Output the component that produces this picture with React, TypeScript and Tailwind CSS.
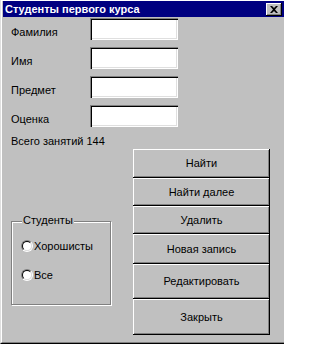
import React from "react";

const raised =
  "shadow-[inset_-1px_-1px_#000,inset_1px_1px_#fff,inset_-2px_-2px_#808080]";
const sunken =
  "shadow-[inset_1px_1px_#808080,inset_2px_2px_#000,inset_-1px_-1px_#fff,inset_-2px_-2px_#dfdfdf]";

const fields = ["Фамилия", "Имя", "Предмет", "Оценка"];

const buttons: { label: string; h: string }[] = [
  { label: "Найти", h: "h-[29px]" },
  { label: "Найти далее", h: "h-[28px]" },
  { label: "Удалить", h: "h-[28px]" },
  { label: "Новая запись", h: "h-[30px]" },
  { label: "Редактировать", h: "h-[35px]" },
  { label: "Закрыть", h: "h-[36px]" },
];

const Radio = ({ label }: { label: string }) => (
  <div className="flex h-[12px] items-center">
    <span className="relative z-10 h-[12px] w-[12px] shrink-0 rounded-full border border-t-[#808080] border-l-[#808080] border-r-white border-b-white">
      <span className="block h-full w-full rounded-full border border-t-black border-l-black border-r-[#dfdfdf] border-b-[#dfdfdf] bg-white" />
    </span>
    <span className="ml-[1px] leading-[13px]">{label}</span>
  </div>
);

export default function App() {
  return (
    <div className="h-[344px] w-[284px] overflow-hidden bg-[#c0c0c0] font-['Liberation_Sans',Arial,sans-serif] text-[11px] text-black">
      <div className="h-full border-l border-b border-l-[#dfdfdf] border-b-black">
        <div className="flex h-full flex-col border-l border-t border-b border-l-white border-t-white border-b-[#808080]">
          {/* title bar */}
          <div className="ml-[1px] flex h-[16px] items-center justify-between bg-[#000080] pl-[2px] pr-[2px]">
            <span className="font-bold leading-[16px] text-white">Студенты первого курса</span>
            <button className={`flex h-[13px] w-[16px] items-center justify-center bg-[#c0c0c0] ${raised}`}>
              <svg width="8" height="7" viewBox="0 0 8 7">
                <path d="M0 0h2l2 2 2-2h2L5 3.5 8 7H6L4 5 2 7H0l3-3.5z" fill="#000" />
              </svg>
            </button>
          </div>

          {/* fields */}
          <div className="mt-[1px] flex flex-col gap-[7px] pl-[9px]">
            {fields.map((f) => (
              <div key={f} className="flex h-[22px] items-end">
                <span className="w-[79px] pb-[1px] leading-[13px]">{f}</span>
                <div className={`h-[22px] w-[88px] bg-white ${sunken}`} />
              </div>
            ))}
          </div>

          <div className="mt-[8px] pl-[9px] leading-[13px]">Всего занятий 144</div>

          <div className="mt-[1px] flex">
            <div className="w-[131px] pl-[9px]">
              <div className="relative mt-[72px] h-[84px] w-[100px] border border-[#808080] shadow-[1px_1px_#fff,inset_1px_1px_#fff]">
                <span className="absolute left-[10px] top-[-8px] bg-[#c0c0c0] px-[1px] leading-[13px]">
                  Студенты
                </span>
                <div className="flex flex-col gap-[17px] pl-[9px] pt-[18px]">
                  <Radio label="Хорошисты" />
                  <Radio label="Все" />
                </div>
              </div>
            </div>
            <div className="flex w-[137px] flex-col">
              {buttons.map((b) => (
                <button
                  key={b.label}
                  className={`flex w-full items-center justify-center bg-[#c0c0c0] leading-[13px] ${b.h} ${raised}`}
                >
                  {b.label}
                </button>
              ))}
            </div>
          </div>
        </div>
      </div>
    </div>
  );
}
